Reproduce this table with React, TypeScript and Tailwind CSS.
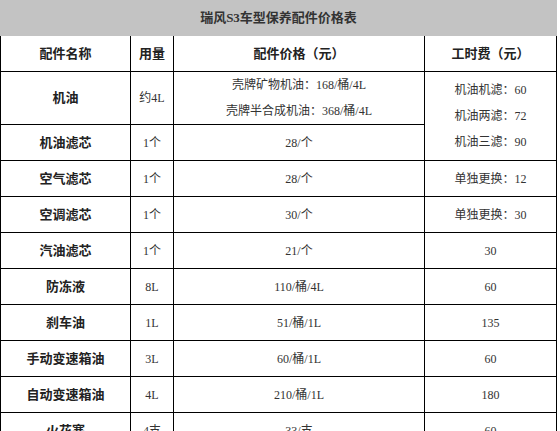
const font = { fontFamily: '"Liberation Serif", "Noto Sans CJK SC", serif' };

type Row = {
  name: string;
  qty: string;
  price: string[];
  labor?: string[];
  laborSpan?: boolean;
  tall?: boolean;
};

const rows: Row[] = [
  {
    name: "机油",
    qty: "约4L",
    price: ["壳牌矿物机油：168/桶/4L", "壳牌半合成机油：368/桶/4L"],
    labor: ["机油机滤：60", "机油两滤：72", "机油三滤：90"],
    laborSpan: true,
    tall: true,
  },
  { name: "机油滤芯", qty: "1个", price: ["28/个"] },
  { name: "空气滤芯", qty: "1个", price: ["28/个"], labor: ["单独更换：12"] },
  { name: "空调滤芯", qty: "1个", price: ["30/个"], labor: ["单独更换：30"] },
  { name: "汽油滤芯", qty: "1个", price: ["21/个"], labor: ["30"] },
  { name: "防冻液", qty: "8L", price: ["110/桶/4L"], labor: ["60"] },
  { name: "刹车油", qty: "1L", price: ["51/桶/1L"], labor: ["135"] },
  { name: "手动变速箱油", qty: "3L", price: ["60/桶/1L"], labor: ["60"] },
  { name: "自动变速箱油", qty: "4L", price: ["210/桶/1L"], labor: ["180"] },
  { name: "火花塞", qty: "4支", price: ["33/支"], labor: ["60"] },
];

const cell = "flex flex-col items-center justify-center border-r border-b border-black text-center";

export default function App() {
  return (
    <div className="w-[560px] h-[431px] overflow-hidden bg-white" style={font}>
      <div className="w-[557px]">
        <div className="h-[36px] bg-[#c3c3c3] flex items-center justify-center text-[13px] font-bold text-[#333]">
          瑞风S3车型保养配件价格表
        </div>
        <div className="grid grid-cols-[130px_43px_251px_132px] grid-rows-[36px_53px] auto-rows-[36px] border-l border-black">
          <div className={`${cell} text-[13px] font-bold text-[#222]`}>配件名称</div>
          <div className={`${cell} text-[13px] font-bold text-[#222]`}>用量</div>
          <div className={`${cell} text-[13px] font-bold text-[#222]`}>配件价格（元）</div>
          <div className={`${cell} text-[13px] font-bold text-[#222]`}>工时费（元）</div>
          {rows.map((r) => (
            <Line key={r.name} row={r} />
          ))}
        </div>
      </div>
    </div>
  );
}

function Line({ row }: { row: Row }) {
  return (
    <>
      <div className={`${cell} text-[13px] font-bold text-[#222]`}>{row.name}</div>
      <div className={`${cell} text-[12px] text-[#333]`}>{row.qty}</div>
      <div className={`${cell} text-[12px] text-[#333] leading-[26px]`}>
        {row.price.map((p) => (
          <div key={p}>{p}</div>
        ))}
      </div>
      {row.labor && (
        <div className={`${cell} text-[12px] text-[#333] leading-[26px] ${row.laborSpan ? "row-span-2" : ""}`}>
          {row.labor.map((l) => (
            <div key={l}>{l}</div>
          ))}
        </div>
      )}
    </>
  );
}
